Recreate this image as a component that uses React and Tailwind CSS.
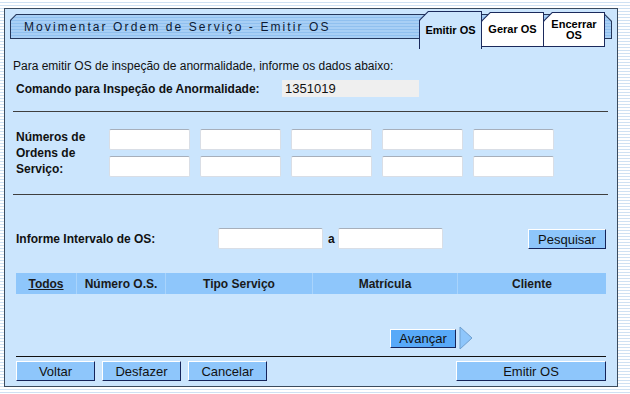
import React from 'react';

const btn =
  'border border-t-white border-l-white border-b-[#15245a] border-r-[#15245a] bg-[#8ec6fb] text-[13px] text-[#111] leading-none flex items-center justify-center';

function Field({ w = 'w-[81px]' }) {
  return (
    <div className={`${w} h-[21px] bg-white border border-[#d9dee6] border-t-[#a7afbb] rounded-[2px]`} />
  );
}

function Tab({ label, active, className }) {
  return (
    <div
      className={`absolute ${className} bg-[#1b2a5c] ${active ? 'pt-[1px] px-[1px]' : 'p-[1px]'} [clip-path:polygon(9px_0,100%_0,100%_100%,0_100%,0_9px)]`}
    >
      <div
        className={`w-full h-full flex items-center justify-center text-center text-[11px] font-bold leading-[11px] text-black ${active ? 'bg-[#cbe5fd]' : 'bg-white'} [clip-path:polygon(8.5px_0,100%_0,100%_100%,0_100%,0_8.5px)]`}
      >
        {label}
      </div>
    </div>
  );
}

export default function App() {
  const cols = [
    { label: 'Todos', w: 'w-[60px]', u: true },
    { label: 'Número O.S.', w: 'w-[89px]' },
    { label: 'Tipo Serviço', w: 'w-[147px]' },
    { label: 'Matrícula', w: 'w-[145px]' },
    { label: 'Cliente', w: 'w-[149px]' },
  ];

  return (
    <div className="w-[630px] h-[394px] overflow-hidden pt-[8px] pl-[4px] font-['Liberation_Sans',Arial,sans-serif] bg-[image:repeating-linear-gradient(180deg,#ffffff_0px,#ffffff_2px,#cfe1f3_2px,#cfe1f3_3px)]">
      <div className="w-[614px] h-[379px] border border-[#3b4b5e] bg-[#cbe5fd]">
        {/* header */}
        <div className="relative h-[39px] pt-[5px]">
          <div className="ml-[5px] w-[602px] h-[25px] p-[1px] bg-[#24365a] [clip-path:polygon(6px_0,calc(100%_-_7px)_0,100%_7px,100%_100%,0_100%,0_6px)]">
            <div className="w-full h-full pl-[13px] flex items-center text-[12px] tracking-[2.1px] text-[#0d1a33] bg-[image:repeating-linear-gradient(180deg,#a8cff5_0px,#a8cff5_2px,#90c0ef_2px,#90c0ef_3px)] [clip-path:polygon(5.5px_0,calc(100%_-_6.5px)_0,100%_6.5px,100%_100%,0_100%,0_5.5px)]">
              Movimentar Ordem de Serviço - Emitir OS
            </div>
          </div>
          <Tab label="Emitir OS" active className="left-[414px] top-[2px] w-[63px] h-[38px]" />
          <Tab label="Gerar OS" className="left-[476px] top-[3px] w-[63px] h-[35px]" />
          <Tab
            label={
              <span>
                Encerrar
                <br />
                OS
              </span>
            }
            className="left-[538px] top-[3px] w-[62px] h-[35px]"
          />
        </div>

        {/* body */}
        <div className="mt-[11px] pl-[8px] h-[14px] text-[12px] leading-[14px] text-[#111]">
          Para emitir OS de inspeção de anormalidade, informe os dados abaixo:
        </div>
        <div className="mt-[7px] pl-[11px] flex items-center h-[17px]">
          <div className="w-[266px] text-[12px] font-bold text-[#111]">Comando para Inspeção de Anormalidade:</div>
          <div className="w-[137px] h-[17px] bg-[#efefef] pl-[3px] flex items-center text-[13px] text-[#111]">1351019</div>
        </div>

        <div className="mt-[14px] ml-[8px] w-[595px] h-[1px] bg-[#3f3f3f]" />

        <div className="mt-[17px] pl-[11px] flex">
          <div className="w-[93px] text-[12px] font-bold leading-[16px] text-[#111]">
            Números de
            <br />
            Ordens de
            <br />
            Serviço:
          </div>
          <div className="grid grid-cols-5 gap-x-[10px] gap-y-[5px]">
            {Array.from({ length: 10 }).map((_, i) => (
              <Field key={i} />
            ))}
          </div>
        </div>

        <div className="mt-[17px] ml-[8px] w-[595px] h-[1px] bg-[#3f3f3f]" />

        <div className="mt-[33px] pl-[11px] flex items-center">
          <div className="w-[202px] text-[12px] font-bold text-[#111]">Informe Intervalo de OS:</div>
          <Field w="w-[105px]" />
          <div className="w-[15px] pl-[5px] text-[12px] font-bold text-[#111]">a</div>
          <Field w="w-[105px]" />
          <div className={`${btn} ml-[85px] w-[78px] h-[20px] mt-[1px]`}>Pesquisar</div>
        </div>

        <div className="mt-[24px] ml-[11px] flex w-[590px] h-[21px] bg-[#8ec6fb]">
          {cols.map((c, i) => (
            <div
              key={c.label}
              className={`${c.w} flex items-center justify-center text-[12px] font-bold text-[#1a1a1a] ${i > 0 ? 'border-l border-[#a9d4fc]' : ''}`}
            >
              <span className={c.u ? 'underline' : ''}>{c.label}</span>
            </div>
          ))}
        </div>

        <div className="mt-[32px] flex items-center">
          <div className={`${btn} ml-[385px] w-[66px] h-[19px] bg-[#58a9f8]`}>Avançar</div>
          <svg width="14" height="24" viewBox="0 0 14 24" className="ml-[3px]">
            <polygon points="1,1 13,12 1,23" fill="#8ec6fb" stroke="#6f9fcf" strokeWidth="1" />
          </svg>
        </div>

        <div className="mt-[6px] ml-[11px] w-[590px] h-[1px] bg-[#111]" />

        <div className="mt-[4px] ml-[11px] flex w-[590px]">
          <div className={`${btn} w-[79px] h-[20px]`}>Voltar</div>
          <div className={`${btn} ml-[7px] w-[79px] h-[20px]`}>Desfazer</div>
          <div className={`${btn} ml-[7px] w-[79px] h-[20px]`}>Cancelar</div>
          <div className={`${btn} ml-auto w-[150px] h-[20px]`}>Emitir OS</div>
        </div>
      </div>
    </div>
  );
}
